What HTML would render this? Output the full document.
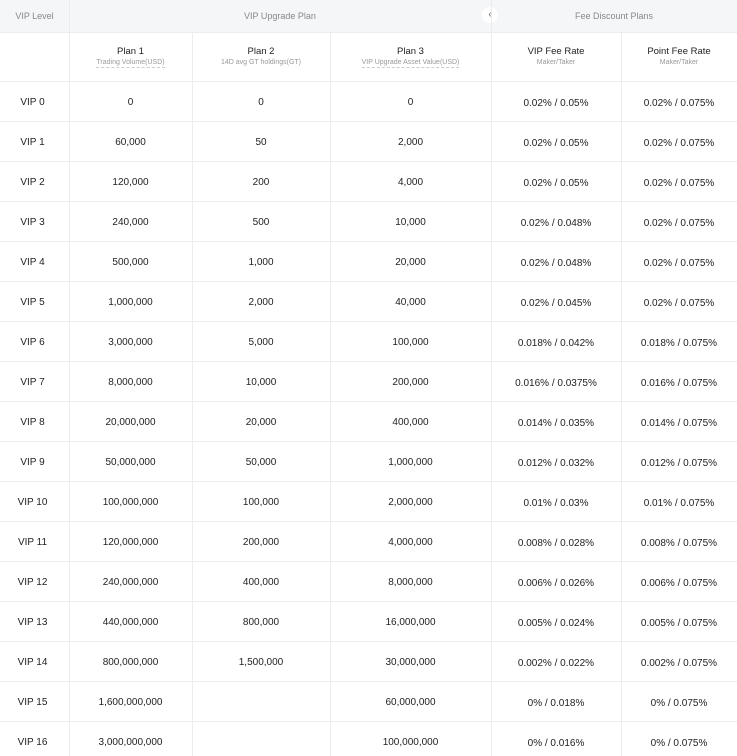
<!DOCTYPE html>
<html><head><meta charset="utf-8"><style>
*{margin:0;padding:0;box-sizing:border-box}
body{width:737px;height:756px;overflow:hidden;background:#fff;font-family:"Liberation Sans",Arial,sans-serif;color:#222;position:relative}
.hd{position:absolute;left:0;top:0;width:737px;height:33px;background:#f5f6f8;border-bottom:1px solid #eaecef}
.t{position:absolute;text-align:center;white-space:nowrap}
.vl{position:absolute;width:1px;background:#eaecef}
.hl{position:absolute;left:0;width:737px;height:1px;background:#eaecef}
.g{color:#888;font-size:9px}
.b{font-size:9.5px;color:#222}
.s{font-size:7px;color:#999}
.u{border-bottom:1px dashed #ccc;padding-bottom:1px}
.c{font-size:10px}
</style></head><body>
<div class="hd"></div>
<div class="t g" style="left:0;width:69px;top:11px">VIP Level</div>
<div class="t g" style="left:69px;width:422px;top:11px">VIP Upgrade Plan</div>
<div class="t g" style="left:491px;width:246px;top:11px">Fee Discount Plans</div>
<div style="position:absolute;left:482px;top:7px;width:16px;height:16px;border-radius:50%;background:#fff;color:#666;font-size:10px;line-height:16px;text-align:center">‹</div>
<div class="vl" style="left:69px;top:0;height:756px"></div>
<div class="vl" style="left:491px;top:0;height:756px"></div>
<div class="vl" style="left:192px;top:33px;height:723px"></div>
<div class="vl" style="left:330px;top:33px;height:723px"></div>
<div class="vl" style="left:621px;top:33px;height:723px"></div>
<div class="t b" style="left:69px;width:123px;top:46px">Plan 1</div>
<div class="t s" style="left:69px;width:123px;top:59px"><span class="u">Trading Volume(USD)</span></div>
<div class="t b" style="left:192px;width:138px;top:46px">Plan 2</div>
<div class="t s" style="left:192px;width:138px;top:59px">14D avg GT holdings(GT)</div>
<div class="t b" style="left:330px;width:161px;top:46px">Plan 3</div>
<div class="t s" style="left:330px;width:161px;top:59px"><span class="u">VIP Upgrade Asset Value(USD)</span></div>
<div class="t b" style="left:491px;width:130px;top:46px">VIP Fee Rate</div>
<div class="t s" style="left:491px;width:130px;top:59px">Maker/Taker</div>
<div class="t b" style="left:621px;width:116px;top:46px">Point Fee Rate</div>
<div class="t s" style="left:621px;width:116px;top:59px">Maker/Taker</div>
<div id="rows"></div>
<script>
var d=[["0","0","0","0.02% / 0.05%","0.02% / 0.075%"],["60,000","50","2,000","0.02% / 0.05%","0.02% / 0.075%"],["120,000","200","4,000","0.02% / 0.05%","0.02% / 0.075%"],["240,000","500","10,000","0.02% / 0.048%","0.02% / 0.075%"],["500,000","1,000","20,000","0.02% / 0.048%","0.02% / 0.075%"],["1,000,000","2,000","40,000","0.02% / 0.045%","0.02% / 0.075%"],["3,000,000","5,000","100,000","0.018% / 0.042%","0.018% / 0.075%"],["8,000,000","10,000","200,000","0.016% / 0.0375%","0.016% / 0.075%"],["20,000,000","20,000","400,000","0.014% / 0.035%","0.014% / 0.075%"],["50,000,000","50,000","1,000,000","0.012% / 0.032%","0.012% / 0.075%"],["100,000,000","100,000","2,000,000","0.01% / 0.03%","0.01% / 0.075%"],["120,000,000","200,000","4,000,000","0.008% / 0.028%","0.008% / 0.075%"],["240,000,000","400,000","8,000,000","0.006% / 0.026%","0.006% / 0.075%"],["440,000,000","800,000","16,000,000","0.005% / 0.024%","0.005% / 0.075%"],["800,000,000","1,500,000","30,000,000","0.002% / 0.022%","0.002% / 0.075%"],["1,600,000,000","","60,000,000","0% / 0.018%","0% / 0.075%"],["3,000,000,000","","100,000,000","0% / 0.016%","0% / 0.075%"]];
var cols=[[0,65],[69,123],[192,138],[330,161],[491,130],[621,116]];
var h='';
for(var i=0;i<d.length;i++){var y=81+i*40;h+='<div class="hl" style="top:'+y+'px"></div>';
var v=["VIP "+i].concat(d[i]);
for(var j=0;j<6;j++){h+='<div class="t c" style="left:'+cols[j][0]+'px;width:'+cols[j][1]+'px;top:'+(y+(j>=4?17:16))+'px">'+v[j]+'</div>';}}
document.getElementById('rows').innerHTML=h;
</script>
</body></html>
